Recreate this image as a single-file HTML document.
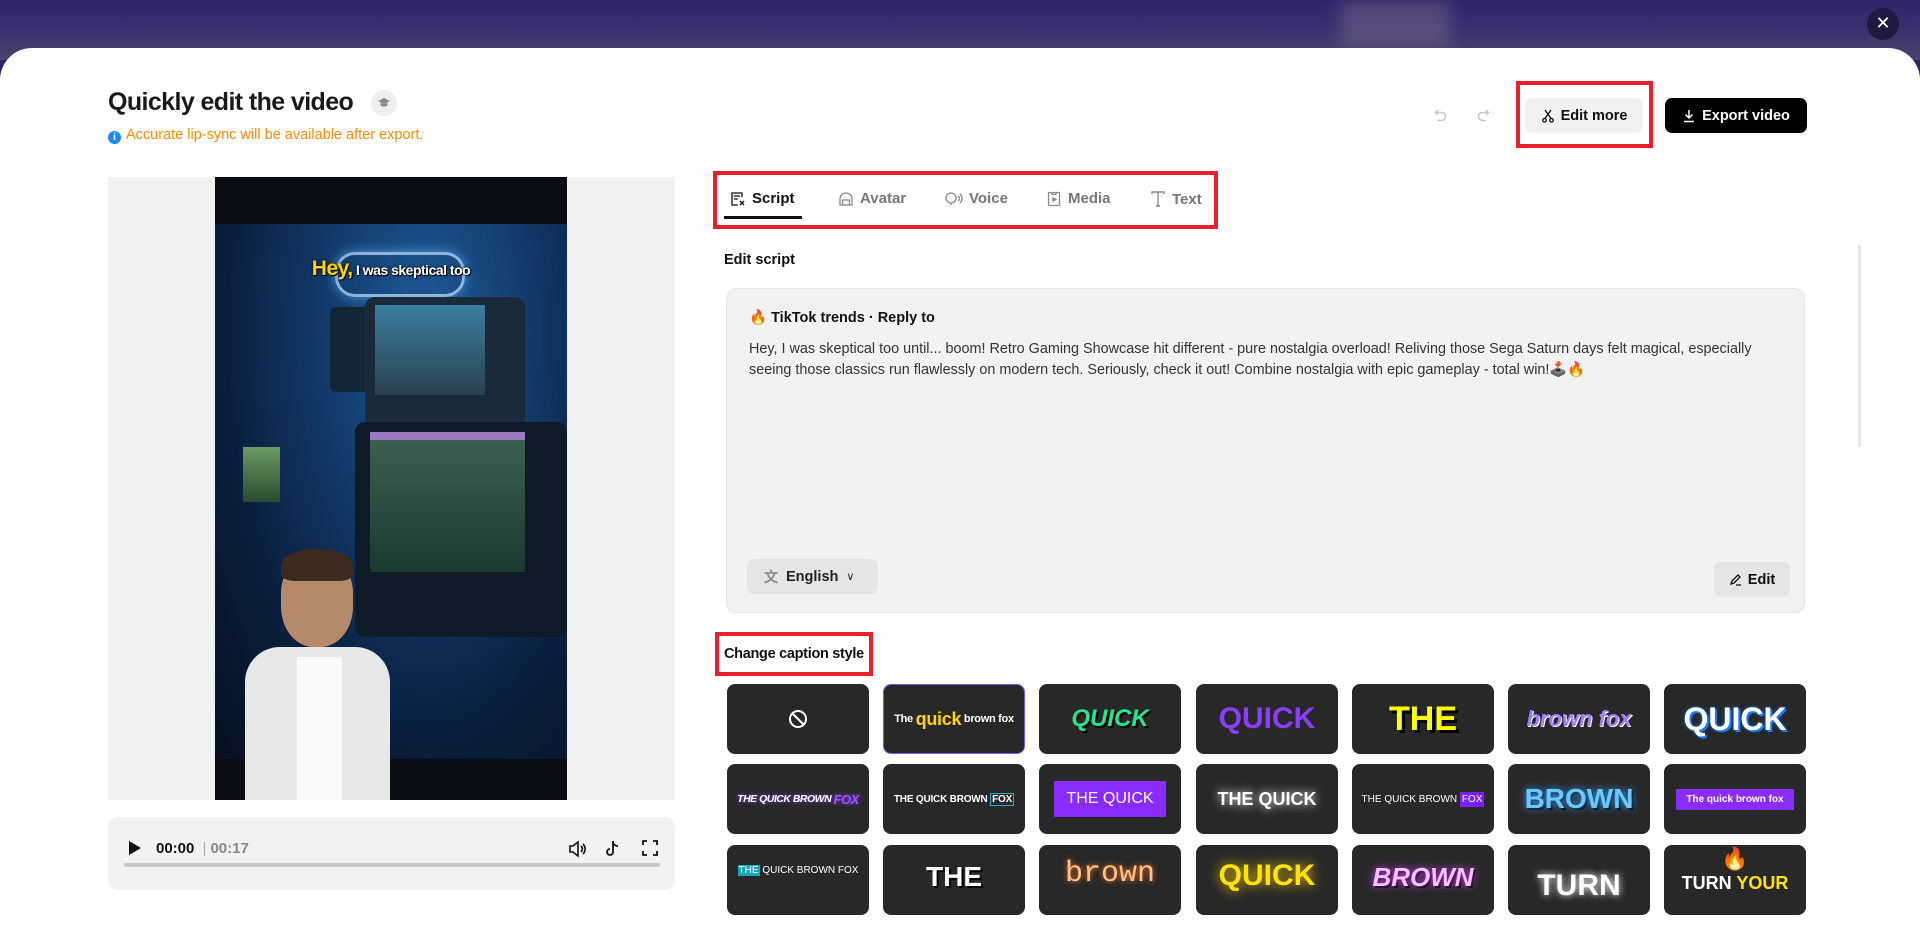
<!DOCTYPE html>
<html><head><meta charset="utf-8"><style>
*{box-sizing:border-box;margin:0;padding:0}
body{width:1920px;height:914px;overflow:hidden;font-family:"Liberation Sans",sans-serif;background:#2e2466;position:relative;color:#111}
.top{position:absolute;left:0;top:0;width:1920px;height:60px;background:linear-gradient(180deg,#2f2368 0%,#3a3070 50%,#4a4468 100%)}
.close{position:absolute;left:1867px;top:8px;width:32px;height:32px;border-radius:50%;background:#1e1a40;color:#fff;font-size:18px;text-align:center;line-height:31px}
.modal{position:absolute;left:0;top:48px;width:1920px;height:900px;background:#fff;border-radius:32px 32px 0 0}
.abs{position:absolute}
h1{position:absolute;left:108px;top:88px;font-size:25px;font-weight:bold;color:#1a1a1a;letter-spacing:-0.6px}
.cap{position:absolute;left:371px;top:90px;width:26px;height:26px;border-radius:50%;background:#eee}
.info{position:absolute;left:108px;top:127px;font-size:14.5px;color:#ff8a00}
.info i{display:inline-block;width:13px;height:13px;border-radius:50%;background:#1a8cff;color:#fff;font-size:10px;font-style:normal;text-align:center;line-height:13px;font-weight:bold;margin-right:5px;vertical-align:-1px}
.btn{position:absolute;border-radius:7px;font-size:14.5px;font-weight:bold;display:flex;align-items:center;justify-content:center;gap:6px}
.red{position:absolute;border:4px solid #e8212a}
.vpanel{position:absolute;left:108px;top:177px;width:567px;height:623px;background:#f1f1f1}
.video{position:absolute;left:215px;top:177px;width:352px;height:623px;background:#0a0d14;overflow:hidden}
.ctrl{position:absolute;left:108px;top:817px;width:567px;height:73px;background:#f2f2f2;border-radius:10px}
.tab{position:absolute;top:190px;font-size:15px;font-weight:bold;color:#777;display:flex;align-items:center;gap:6px}
.box{position:absolute;left:726px;top:288px;width:1079px;height:325px;background:#f2f2f2;border-radius:10px;border:1px solid #e6e6e6}
.grid{position:absolute;left:727px;top:684px}
.cell{position:absolute;width:142px;height:70px;background:#282828;border-radius:8px;display:flex;align-items:center;justify-content:center;font-family:"Liberation Sans",sans-serif;font-weight:bold;overflow:hidden;white-space:nowrap}
</style></head><body>
<div class="top"></div>
<div class="abs" style="left:1340px;top:0;width:110px;height:48px;background:rgba(140,130,150,.35);filter:blur(8px)"></div>
<div class="close">✕</div>
<div class="modal"></div>

<h1>Quickly edit the video</h1>
<div class="cap"><svg width="26" height="26" viewBox="0 0 26 26"><path d="M7 11l6-3 6 3-6 3z" fill="#888"/><path d="M9.5 12.5v3c1.5 1.4 5.5 1.4 7 0v-3l-3.5 1.8z" fill="#888"/></svg></div>
<div class="info"><i>i</i>Accurate lip-sync will be available after export.</div>

<svg class="abs" style="left:1433px;top:107px" width="16" height="16" viewBox="0 0 16 16" fill="none" stroke="#c8c8c8" stroke-width="1.5"><path d="M5 3L2.5 5.5 5 8"/><path d="M3 5.5h5.5a4 4 0 010 8H5"/></svg>
<svg class="abs" style="left:1475px;top:107px" width="16" height="16" viewBox="0 0 16 16" fill="none" stroke="#c8c8c8" stroke-width="1.5"><path d="M11 3l2.5 2.5L11 8"/><path d="M13 5.5H7.5a4 4 0 000 8H11"/></svg>

<div class="red" style="left:1516px;top:81px;width:137px;height:67px"></div>
<div class="btn" style="left:1525px;top:98px;width:118px;height:35px;background:#f1f1f1;color:#111">
<svg width="14" height="14" viewBox="0 0 14 14" fill="none" stroke="#111" stroke-width="1.3"><path d="M4 1l6 8.5M10 1L4 9.5"/><circle cx="3.5" cy="11.3" r="1.8"/><circle cx="10.5" cy="11.3" r="1.8"/></svg>Edit more</div>
<div class="btn" style="left:1665px;top:98px;width:142px;height:35px;background:#000;color:#fff">
<svg width="14" height="14" viewBox="0 0 14 14" fill="none" stroke="#fff" stroke-width="1.5"><path d="M7 1v8M3.5 5.5L7 9l3.5-3.5M2 12.5h10"/></svg>Export video</div>

<div class="vpanel"></div>
<div class="video">
 <div class="abs" style="left:0;top:47px;width:352px;height:535px;background:radial-gradient(ellipse at 60% 20%,#1e5a9a 0%,#123a6a 35%,#0a2040 65%,#061020 100%)"></div>
 <div class="abs" style="left:120px;top:75px;width:130px;height:45px;border:3px solid #bfe3ff;border-radius:20px;opacity:.7;box-shadow:0 0 12px #5ab0ff"></div>
 <div class="abs" style="left:115px;top:130px;width:45px;height:85px;background:#142538;border-radius:6px"></div>
 <div class="abs" style="left:150px;top:120px;width:160px;height:130px;background:#1a2a3a;border-radius:10px"></div>
 <div class="abs" style="left:160px;top:128px;width:110px;height:90px;background:linear-gradient(#3a7fa0,#2a4050)"></div>
 <div class="abs" style="left:140px;top:245px;width:212px;height:215px;background:#0e1a28;border-radius:10px"></div>
 <div class="abs" style="left:155px;top:255px;width:155px;height:140px;background:linear-gradient(#3a6050,#1a3a30);border-top:8px solid #9a7ac0"></div>
 <div class="abs" style="left:28px;top:270px;width:37px;height:55px;background:linear-gradient(#6a9a60,#2a4a30)"></div>
 <div class="abs" style="left:66px;top:380px;width:72px;height:90px;background:#b58a6a;border-radius:40% 40% 45% 45%"></div>
 <div class="abs" style="left:66px;top:372px;width:72px;height:32px;background:#3a2a20;border-radius:50% 50% 20% 20%"></div>
 <div class="abs" style="left:30px;top:470px;width:145px;height:160px;background:#e8e8e8;border-radius:35px 35px 0 0"></div>
 <div class="abs" style="left:82px;top:480px;width:45px;height:150px;background:#fafafa"></div>
 <div class="abs" style="left:0;top:80px;width:352px;text-align:center;font-weight:bold;font-size:14px;color:#fff;text-shadow:0 0 3px #000,1px 1px 0 #000;letter-spacing:-0.5px"><span style="color:#ffd400;font-size:21px">Hey,</span> I was skeptical too</div>
</div>
<div class="ctrl">
 <svg class="abs" style="left:19px;top:22px" width="16" height="18" viewBox="0 0 16 18"><path d="M2 2l12 7-12 7z" fill="#111"/></svg>
 <div class="abs" style="left:48px;top:23px;font-size:15px;font-weight:bold">00:00 <span style="color:#aaa;font-weight:normal;margin:0 4px">|</span><span style="color:#888">00:17</span></div>
 <svg class="abs" style="left:459px;top:22px" width="20" height="20" viewBox="0 0 20 20" fill="none" stroke="#111" stroke-width="1.6"><path d="M3 7h3l5-4v14l-5-4H3z"/><path d="M14 7a4 4 0 010 6M16 5a7 7 0 010 10"/></svg>
 <svg class="abs" style="left:496px;top:22px" width="18" height="20" viewBox="0 0 18 20" fill="none" stroke="#111" stroke-width="1.8"><path d="M9 2v11a3 3 0 11-3-3M9 2c0 3 2 5 5 5"/></svg>
 <svg class="abs" style="left:533px;top:22px" width="18" height="18" viewBox="0 0 18 18" fill="none" stroke="#111" stroke-width="1.8"><path d="M2 6V2h4M12 2h4v4M16 12v4h-4M6 16H2v-4"/></svg>
 <div class="abs" style="left:16px;top:46px;width:536px;height:4px;background:#c8c8c8;border-radius:2px"></div>
</div>

<div class="red" style="left:713px;top:171px;width:505px;height:58px"></div>
<div class="tab" style="left:730px;color:#111"><svg width="16" height="16" viewBox="0 0 16 16" fill="none" stroke="#111" stroke-width="1.3"><path d="M12 6V2H2v12h6M4 5h6M4 8h4"/><path d="M10 10l4 4M14 10l-4 4"/></svg>Script</div>
<div class="abs" style="left:724px;top:216px;width:78px;height:3px;background:#111"></div>
<div class="tab" style="left:838px"><svg width="16" height="16" viewBox="0 0 16 16" fill="none" stroke="#888" stroke-width="1.3"><path d="M2 14V8a6 6 0 0112 0v6z"/><path d="M4.5 9h7v3a2 2 0 01-2 2h-3a2 2 0 01-2-2z"/></svg>Avatar</div>
<div class="tab" style="left:945px"><svg width="18" height="16" viewBox="0 0 18 16" fill="none" stroke="#888" stroke-width="1.3"><path d="M6 14V12a5 5 0 113-9 5 5 0 01-3 9"/><path d="M13 5a3 3 0 010 5M15 3a6 6 0 010 9"/></svg>Voice</div>
<div class="tab" style="left:1046px"><svg width="16" height="16" viewBox="0 0 16 16" fill="none" stroke="#888" stroke-width="1.3"><rect x="2.5" y="1.5" width="11" height="13" rx="1"/><path d="M6 1.5v2h4v-2"/><path d="M7 7l3 1.5-3 1.5z" fill="#888"/></svg>Media</div>
<div class="tab" style="left:1150px"><svg width="16" height="18" viewBox="0 0 16 18" fill="none" stroke="#888" stroke-width="1.4"><path d="M2 4V2h12v2M8 2v14M6 16h4"/></svg>Text</div>

<div class="abs" style="left:1858px;top:245px;width:3px;height:202px;background:#e6e6e6;border-radius:2px"></div>

<div class="abs" style="left:724px;top:252px;font-size:14.5px;font-weight:bold">Edit script</div>
<div class="box">
 <div class="abs" style="left:22px;top:20px;font-size:14.5px;font-weight:bold">🔥 TikTok trends · Reply to</div>
 <div class="abs" style="left:22px;top:50px;width:1040px;font-size:14.4px;line-height:21px;color:#333">Hey, I was skeptical too until... boom! Retro Gaming Showcase hit different - pure nostalgia overload! Reliving those Sega Saturn days felt magical, especially seeing those classics run flawlessly on modern tech. Seriously, check it out! Combine nostalgia with epic gameplay - total win!🕹️🔥</div>
 <div class="abs" style="left:20px;top:270px;width:131px;height:35px;background:#e5e5e5;border-radius:7px;font-size:14.5px;font-weight:bold;display:flex;align-items:center;padding-left:17px;gap:8px;color:#222"><span style="color:#888;font-size:14px">文</span>English <span style="font-weight:normal;font-size:11px">∨</span></div>
 <div class="abs" style="left:987px;top:273px;width:76px;height:35px;background:#e5e5e5;border-radius:7px;font-size:14.5px;font-weight:bold;display:flex;align-items:center;justify-content:center;gap:6px"><svg width="13" height="13" viewBox="0 0 13 13" fill="none" stroke="#111" stroke-width="1.3"><path d="M2 11l1-3 6-6 2 2-6 6zM7 12h5"/></svg>Edit</div>
</div>

<div class="red" style="left:715px;top:632px;width:158px;height:44px"></div>
<div class="abs" style="left:724px;top:646px;font-size:14.5px;font-weight:bold;letter-spacing:-0.3px">Change caption style</div>

<div class="grid">
 <div class="cell" style="left:0;top:0"><svg width="22" height="22" viewBox="0 0 22 22" fill="none" stroke="#fff" stroke-width="2"><circle cx="11" cy="11" r="8"/><path d="M5.5 5.5l11 11"/></svg></div>
 <div class="cell" style="left:156px;top:0;border:1.5px solid #6a5aff;color:#fff;font-size:11px;letter-spacing:-0.3px">The&nbsp;<span style="color:#ffd400;font-size:18px">quick</span>&nbsp;brown fox</div>
 <div class="cell" style="left:312px;top:0;color:#20e890;font-size:24px;font-style:italic;text-shadow:2px 2px 0 #000">QUICK</div>
 <div class="cell" style="left:469px;top:0;color:#8a3cff;font-size:30px">QUICK</div>
 <div class="cell" style="left:625px;top:0;color:#ffff00;font-size:34px;text-shadow:3px 3px 0 #000">THE</div>
 <div class="cell" style="left:781px;top:0;color:#a07aff;font-size:22px;font-style:italic;text-shadow:1px 1px 0 #fff">brown fox</div>
 <div class="cell" style="left:937px;top:0;color:#fff;font-size:32px;text-shadow:0 0 3px #1a7cff,2px 2px 0 #1a7cff">QUICK</div>

 <div class="cell" style="left:0;top:80px;color:#fff;font-size:10.5px;font-style:italic;letter-spacing:-0.5px;text-shadow:0 0 4px #8a3cff">THE QUICK BROWN&nbsp;<span style="color:#a050ff;font-size:13px">FOX</span></div>
 <div class="cell" style="left:156px;top:80px;color:#fff;font-size:10px;letter-spacing:-0.2px">THE QUICK BROWN&nbsp;<span style="border:1px solid #2ad;padding:0 1px">FOX</span></div>
 <div class="cell" style="left:312px;top:80px"><div style="background:#8a2cff;color:#fff;font-size:16px;font-weight:normal;padding:9px 12px">THE QUICK</div></div>
 <div class="cell" style="left:469px;top:80px;color:#fff;font-size:18px;text-shadow:0 0 10px #fff">THE QUICK</div>
 <div class="cell" style="left:625px;top:80px;color:#fff;font-size:10px;font-weight:normal">THE QUICK BROWN&nbsp;<span style="background:#7a20ff;padding:2px">FOX</span></div>
 <div class="cell" style="left:781px;top:80px;color:#6ac8ff;font-size:28px;text-shadow:0 0 8px #3aa0ff,2px 2px 0 #000">BROWN</div>
 <div class="cell" style="left:937px;top:80px"><div style="background:#8a2cff;color:#fff;font-size:10px;padding:5px 10px">The quick brown fox</div></div>

 <div class="cell" style="left:0;top:161px;color:#fff;font-size:10px;font-weight:normal;align-items:flex-start;padding-top:20px"><span style="background:#1ab;padding:0 1px">THE</span>&nbsp;QUICK BROWN FOX</div>
 <div class="cell" style="left:156px;top:161px;color:#fff;font-size:28px;align-items:flex-start;padding-top:16px;text-shadow:2px 2px 0 #000">THE</div>
 <div class="cell" style="left:312px;top:161px;color:#ffc08a;font-size:30px;font-weight:normal;font-family:'Liberation Mono',monospace;align-items:flex-start;padding-top:12px;text-shadow:0 0 6px #ff7a20">brown</div>
 <div class="cell" style="left:469px;top:161px;color:#ffe400;font-size:30px;align-items:flex-start;padding-top:14px;text-shadow:0 0 12px #ffd000">QUICK</div>
 <div class="cell" style="left:625px;top:161px;color:#f8c0ff;font-size:26px;font-style:italic;align-items:flex-start;padding-top:17px;text-shadow:0 0 8px #d040ff,2px 2px 0 #000">BROWN</div>
 <div class="cell" style="left:781px;top:161px;color:#fff;font-size:30px;align-items:flex-start;padding-top:24px;text-shadow:0 0 8px #fff">TURN</div>
 <div class="cell" style="left:937px;top:161px;color:#fff;font-size:18px;flex-direction:column;justify-content:flex-start;padding-top:0"><span style="font-size:22px;line-height:28px">🔥</span><span>TURN <span style="color:#ffe400">YOUR</span></span></div>
</div>
</body></html>
